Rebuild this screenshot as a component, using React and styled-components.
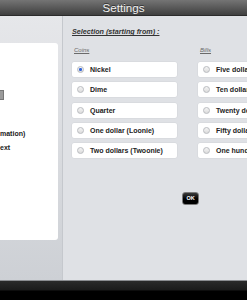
import React from "react";
import styled, { createGlobalStyle } from "styled-components";

const GlobalStyle = createGlobalStyle`
  html, body {
    margin: 0;
    padding: 0;
    overflow: hidden;
  }
  body {
    font-family: 'Liberation Sans', Arial, sans-serif;
  }
`

const Screen = styled.div`
  display: flex;
  flex-direction: column;
  width: 247px;
  height: 300px;
  overflow: hidden;
`

const TitleBar = styled.div`
  display: flex;
  align-items: center;
  justify-content: center;
  height: 15px;
  flex-shrink: 0;
  background: linear-gradient(#747474, #3f3f3f);
  border-bottom: 1px solid #2b2b2b;
  color: #f2f2f2;
  font-size: 11.6px;
  text-shadow: 0 -1px 0 #333;
`

const Main = styled.div`
  display: flex;
  flex: 1;
  min-height: 0;
`

const LeftPanel = styled.div`
  width: 63px;
  flex-shrink: 0;
  background: linear-gradient(#e6e7ea, #cdd0d5);
  border-right: 1px solid #c5c8cd;
  padding-top: 27px;
  box-sizing: border-box;
`

const Card = styled.div`
  width: 58px;
  height: 197px;
  background: #fff;
  border-radius: 0 3px 3px 0;
  padding-top: 47px;
  box-sizing: border-box;
`

const GrayKey = styled.div`
  width: 4px;
  height: 10px;
  background: #9a9a9a;
  border: 1px solid #777;
  border-left: none;
  box-sizing: border-box;
`

const CardLabel = styled.div`
  font-size: 7px;
  font-weight: bold;
  line-height: 9px;
  color: #222;
  white-space: nowrap;
  margin-top: ${p => p.$top}px;
`

const RightPanel = styled.div`
  flex: 1;
  background: #dfe1e5;
  padding: 11px 0 0 9px;
  overflow: hidden;
`

const Heading = styled.div`
  font-size: 7.2px;
  font-weight: bold;
  font-style: italic;
  text-decoration: underline;
  color: #333;
  line-height: 9px;
  white-space: nowrap;
`

const Columns = styled.div`
  display: grid;
  grid-template-columns: 105px 105px;
  column-gap: 21px;
  margin-top: 11px;
`

const Column = styled.div`
  display: flex;
  flex-direction: column;
  gap: 5.2px;
`

const ColumnLabel = styled.div`
  font-size: 6px;
  font-style: italic;
  text-decoration: underline;
  color: #6a6a6a;
  line-height: 7px;
  margin: 0 0 3px 2px;
`

const Row = styled.div`
  display: flex;
  align-items: center;
  gap: 6px;
  height: 15px;
  padding-left: 5px;
  background: #fff;
  border-radius: 2px;
  box-shadow: 0 0 0 0.5px #d4d6da;
  font-size: 7px;
  font-weight: bold;
  color: #222;
  white-space: nowrap;
`

const Radio = styled.span`
  position: relative;
  width: 5px;
  height: 5px;
  flex-shrink: 0;
  border-radius: 50%;
  border: 0.5px solid #b9bbbf;
  background: linear-gradient(#f4f4f4, #dcdcdc);

  &::after {
    content: '';
    display: ${p => (p.$checked ? 'block' : 'none')};
    position: absolute;
    left: 1.2px;
    top: 1.2px;
    width: 2.6px;
    height: 2.6px;
    border-radius: 50%;
    background: #2f62d9;
  }
`

const OkButton = styled.div`
  display: flex;
  align-items: center;
  justify-content: center;
  width: 17px;
  height: 13px;
  margin: 34px 0 0 110px;
  box-sizing: border-box;
  background: linear-gradient(#3a3a3a, #000 55%);
  border: 1px solid #7a7a7a;
  border-radius: 3px;
  color: #fff;
  font-size: 5.5px;
  font-weight: bold;
`

const BottomBar = styled.div`
  height: 20px;
  flex-shrink: 0;
  background: linear-gradient(#2a2a2a 0, #1a1a1a 48%, #000 52%, #000 100%);
  border-top: 1px solid #8a8c90;
  box-sizing: border-box;
`

const coins = ['Nickel', 'Dime', 'Quarter', 'One dollar (Loonie)', 'Two dollars (Twoonie)']
const bills = ['Five dollars', 'Ten dollars', 'Twenty dollars', 'Fifty dollars', 'One hundred dollars']

const Choice = ({ label, checked }) => (
  <Row>
    <Radio $checked={checked} />
    {label}
  </Row>
)

export const App = () => {
  return (
    <Screen>
      <GlobalStyle />
      <TitleBar>Settings</TitleBar>
      <Main>
        <LeftPanel>
          <Card>
            <GrayKey />
            <CardLabel $top={29}>mation)</CardLabel>
            <CardLabel $top={5}>ext</CardLabel>
          </Card>
        </LeftPanel>
        <RightPanel>
          <Heading>Selection (starting from) :</Heading>
          <Columns>
            <Column>
              <ColumnLabel>Coins</ColumnLabel>
              {coins.map((c, i) => <Choice key={c} label={c} checked={i === 0} />)}
            </Column>
            <Column>
              <ColumnLabel>Bills</ColumnLabel>
              {bills.map(b => <Choice key={b} label={b} />)}
            </Column>
          </Columns>
          <OkButton>OK</OkButton>
        </RightPanel>
      </Main>
      <BottomBar />
    </Screen>
  )
}

export default App
